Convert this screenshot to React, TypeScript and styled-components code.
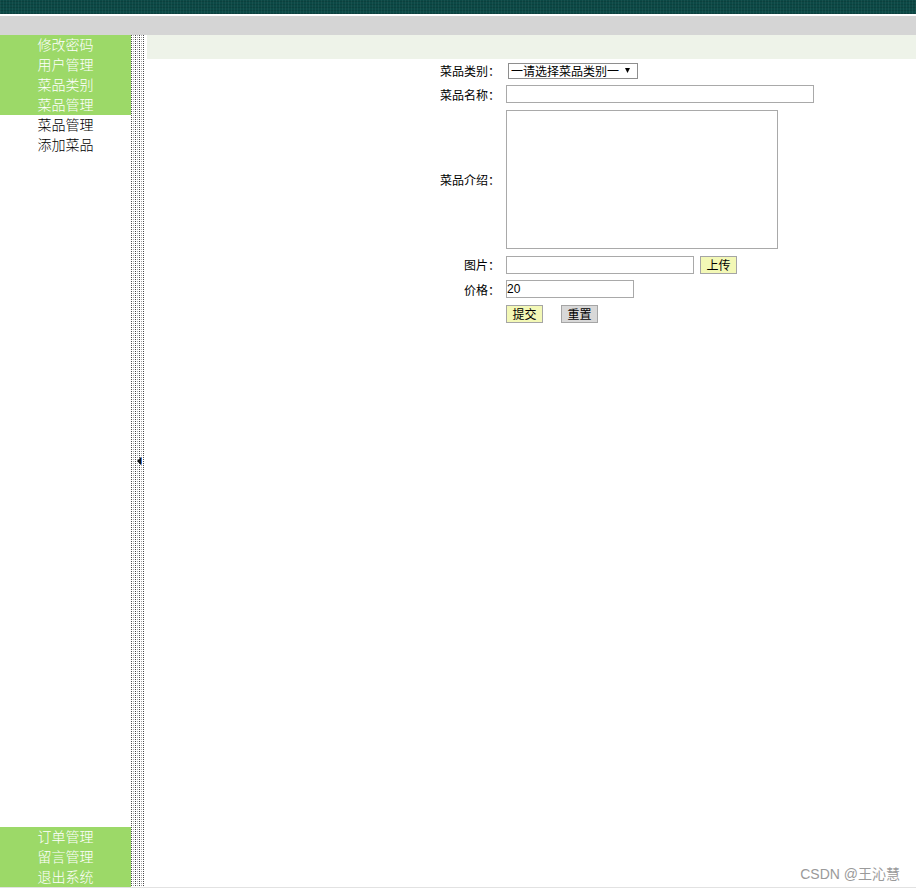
import React from "react";
import styled, { createGlobalStyle } from "styled-components";

const Global = createGlobalStyle`
  html, body { margin: 0; padding: 0; background: #fff; }
  body { font-family: "Noto Sans CJK SC", "Liberation Sans", sans-serif; font-size: 12px; color: #000; }
  * { box-sizing: border-box; }
`;

const Page = styled.div`
  position: relative;
  width: 916px;
  height: 891px;
  overflow: hidden;
  display: flex;
  flex-direction: column;
`;

const TopBar = styled.div`
  height: 14px;
  background-color: #0c4946;
  background-image:
    repeating-linear-gradient(90deg, rgba(255,255,255,0.05) 0 1px, transparent 1px 3px),
    repeating-linear-gradient(0deg, rgba(0,0,0,0.12) 0 1px, transparent 1px 3px);
  border-bottom: 2px solid #ffffff;
  box-sizing: content-box;
`;

const GrayBar = styled.div`
  height: 19px;
  background: #d5d5d5;
`;

const Main = styled.div`
  display: flex;
  height: 853px;
  border-bottom: 1px solid #e2e2e2;
`;

const Sidebar = styled.nav`
  width: 131px;
  display: flex;
  flex-direction: column;
  justify-content: space-between;
`;

const Group = styled.div`
  display: flex;
  flex-direction: column;
`;

const NavItem = styled.div<{ $active?: boolean }>`
  height: 20px;
  line-height: 18px;
  text-align: center;
  font-size: 14px;
  font-weight: 300;
  background: ${(p) => (p.$active ? "#9cd968" : "#ffffff")};
  color: ${(p) => (p.$active ? "#ffffff" : "#000000")};
`;

const Divider = styled.div`
  width: 16px;
  display: flex;
  align-items: center;
  justify-content: center;
  background-color: #fff;
  background-image:
    linear-gradient(to bottom, transparent 50%, #ffffff 50%),
    repeating-linear-gradient(90deg, #4a4a4a 0 1px, #ffffff 1px 2px, #a8a8a8 2px 3px, #ffffff 3px 4px);
  background-size: 100% 2px, 14px 100%;
  background-repeat: repeat, no-repeat;
`;

const Content = styled.div`
  flex: 1;
  display: flex;
  flex-direction: column;
`;

const Strip = styled.div`
  height: 24px;
  background: #eef3e9;
`;

const Form = styled.form`
  margin-left: 292px;
  display: grid;
  grid-template-columns: 61px auto;
  grid-template-rows: 23px 24px 146px 25px 24px 25px;
  column-gap: 6px;
  align-items: center;
  justify-content: start;
`;

const Label = styled.label`
  text-align: right;
  font-size: 12px;
  white-space: nowrap;
`;

const Field = styled.div<{ $gap?: number }>`
  display: flex;
  align-items: center;
  gap: ${(p) => p.$gap ?? 0}px;
`;

const Select = styled.select`
  appearance: none;
  -webkit-appearance: none;
  margin-left: 2px;
  width: 130px;
  height: 16px;
  padding: 0 14px 0 2px;
  font-family: "Noto Sans CJK SC", sans-serif;
  font-size: 12px;
  line-height: 14px;
  border: 1px solid #8e8e8e;
  border-radius: 0;
  background: #fff url("data:image/svg+xml,%3Csvg xmlns='http://www.w3.org/2000/svg' width='5' height='5'%3E%3Cpath d='M0 0h5L2.5 5z' fill='%23000'/%3E%3C/svg%3E") no-repeat right 7px center;
  color: #000;
`;

const TextInput = styled.input<{ $w: number }>`
  width: ${(p) => p.$w}px;
  height: 18px;
  border: 1px solid #a9a9a9;
  padding: 0;
  font-family: "Liberation Sans", sans-serif;
  font-size: 12px;
  outline: none;
`;

const TextArea = styled.textarea`
  width: 272px;
  height: 139px;
  border: 1px solid #a9a9a9;
  resize: none;
  outline: none;
`;

const Button = styled.button<{ $tone: "yellow" | "gray" }>`
  height: 18px;
  width: 37px;
  padding: 0;
  border: 1px solid #a5a5a5;
  background: ${(p) => (p.$tone === "yellow" ? "#f3f8b6" : "#d8d8d8")};
  font-family: "Noto Sans CJK SC", sans-serif;
  font-size: 12px;
  line-height: 16px;
  color: #000;
`;

const Watermark = styled.div`
  position: absolute;
  right: 16px;
  bottom: 8px;
  font-family: "Liberation Sans", "Noto Sans CJK SC", sans-serif;
  font-size: 14px;
  color: #9a9a9a;
`;

const Arrow = () => (
  <svg width="5" height="8" viewBox="0 0 5 8">
    <path d="M4 0 L0 4 L4 8 Z" fill="#111" />
    <path d="M4 0 L5 1 L5 7 L4 8 Z" fill="#2f6fd0" />
  </svg>
);

export default function App() {
  return (
    <Page>
      <Global />
      <TopBar />
      <GrayBar />
      <Main>
        <Sidebar>
          <Group>
            <NavItem $active>修改密码</NavItem>
            <NavItem $active>用户管理</NavItem>
            <NavItem $active>菜品类别</NavItem>
            <NavItem $active>菜品管理</NavItem>
            <NavItem>菜品管理</NavItem>
            <NavItem>添加菜品</NavItem>
          </Group>
          <Group>
            <NavItem $active>订单管理</NavItem>
            <NavItem $active>留言管理</NavItem>
            <NavItem $active>退出系统</NavItem>
          </Group>
        </Sidebar>
        <Divider>
          <Arrow />
        </Divider>
        <Content>
          <Strip />
          <Form onSubmit={(e) => e.preventDefault()}>
            <Label>菜品类别：</Label>
            <Field>
              <Select defaultValue="">
                <option value="">一请选择菜品类别一</option>
              </Select>
            </Field>
            <Label>菜品名称：</Label>
            <Field>
              <TextInput $w={308} />
            </Field>
            <Label>菜品介绍：</Label>
            <Field>
              <TextArea />
            </Field>
            <Label>图片：</Label>
            <Field $gap={6}>
              <TextInput $w={188} />
              <Button type="button" $tone="yellow">上传</Button>
            </Field>
            <Label>价格：</Label>
            <Field>
              <TextInput $w={128} defaultValue="20" />
            </Field>
            <span />
            <Field $gap={18}>
              <Button type="submit" $tone="yellow">提交</Button>
              <Button type="reset" $tone="gray">重置</Button>
            </Field>
          </Form>
        </Content>
      </Main>
      <Watermark>CSDN @王沁慧</Watermark>
    </Page>
  );
}
